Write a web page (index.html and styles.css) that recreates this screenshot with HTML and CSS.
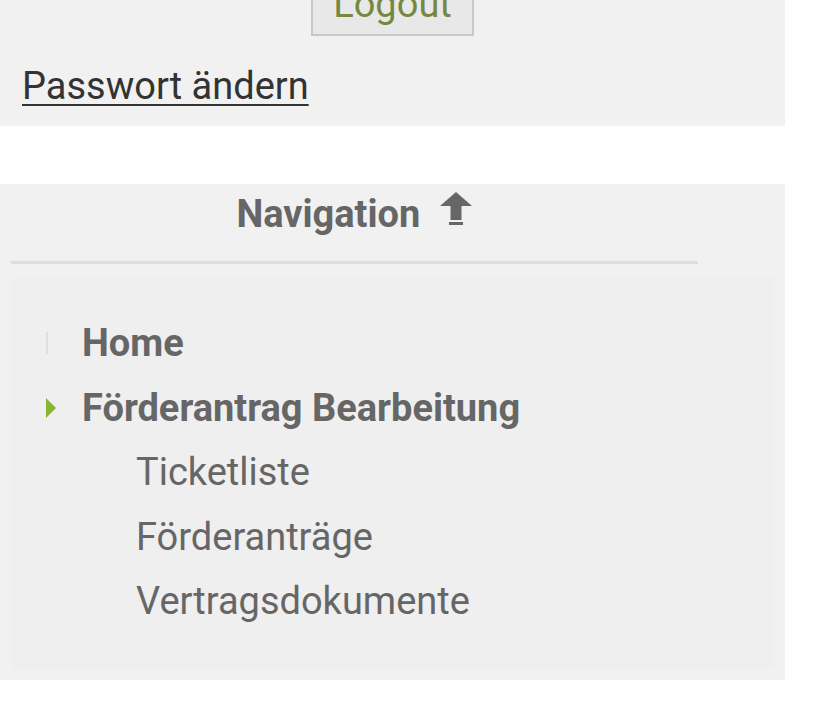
FILE: index.html
```html
<!DOCTYPE html>
<html lang="de">
<head>
<meta charset="utf-8">
<title>Navigation</title>
<link rel="stylesheet" href="styles.css">
</head>
<body>
<div class="sidebar">
  <div class="userbox">
    <div class="logout-row"><button class="logout" type="button">Logout</button></div>
    <a class="pw-link" href="#">Passwort ändern</a>
  </div>
  <div class="nav">
    <div class="nav-head">
      <span class="nav-title">Navigation</span>
      <svg class="nav-icon" width="32" height="34" viewBox="0 0 32 34" aria-hidden="true">
        <path d="M16 0 L32 14 L21.5 14 L21.5 28 L10.5 28 L10.5 14 L0 14 Z" fill="#666"/>
        <rect x="9" y="30" width="14" height="3" fill="#666"/>
      </svg>
    </div>
    <ul class="menu">
      <li class="item top"><span class="mark bar"></span>Home</li>
      <li class="item top"><span class="mark tri"></span>Förderantrag Bearbeitung</li>
      <li class="item sub">Ticketliste</li>
      <li class="item sub">Förderanträge</li>
      <li class="item sub">Vertragsdokumente</li>
    </ul>
  </div>
</div>
</body>
</html>
```
FILE: styles.css
```css
html, body {
  margin: 0;
  padding: 0;
  background: #ffffff;
}
body {
  font-family: Roboto, "Liberation Sans", sans-serif;
}
.sidebar {
  width: 785px;
}
.userbox {
  background: #f1f1f1;
  padding: 0 0 18px 22px;
}
.logout-row {
  display: flex;
  justify-content: center;
  padding-right: 22px;
  margin-top: -28px;
}
.logout {
  font-family: Roboto, "Liberation Sans", sans-serif;
  font-size: 38px;
  line-height: 60px;
  height: 64px;
  padding: 0 20px;
  color: #76883f;
  background: #e8e8e8;
  border: 2px solid #c8c8c8;
  border-radius: 0;
}
.pw-link {
  display: inline-block;
  margin-top: 28px;
  font-size: 38px;
  line-height: 44px;
  color: #333333;
  text-decoration: underline;
  text-decoration-thickness: 2px;
  text-underline-offset: 5px;
}
.nav {
  margin-top: 58px;
  background: #f1f1f1;
  padding: 0 11px 11px;
}
.nav-head {
  width: 90%;
  display: flex;
  justify-content: center;
  align-items: flex-start;
  gap: 20px;
  height: 69px;
  padding-top: 8px;
  border-bottom: 3px solid #dddddd;
  margin-bottom: 13px;
}
.nav-title {
  font-size: 38px;
  line-height: 45px;
  font-weight: 700;
  color: #666666;
}
.nav-icon {
  display: block;
  margin-top: 0;
}
.menu {
  list-style: none;
  margin: 0;
  padding: 34px 0 35px;
  background: #efefef;
}
.item {
  position: relative;
  font-size: 38px;
  line-height: 64.5px;
  height: 64.5px;
  color: #666666;
}
.item.top {
  padding-left: 71px;
  font-weight: 700;
}
.item.sub {
  padding-left: 125px;
}
.mark {
  position: absolute;
  left: 35px;
  top: 50%;
}
.mark.bar {
  width: 2px;
  height: 22px;
  margin-top: -11px;
  background: #dedede;
}
.mark.tri {
  width: 0;
  height: 0;
  margin-top: -10px;
  border-top: 10px solid transparent;
  border-bottom: 10px solid transparent;
  border-left: 10px solid #8ab534;
}
```
